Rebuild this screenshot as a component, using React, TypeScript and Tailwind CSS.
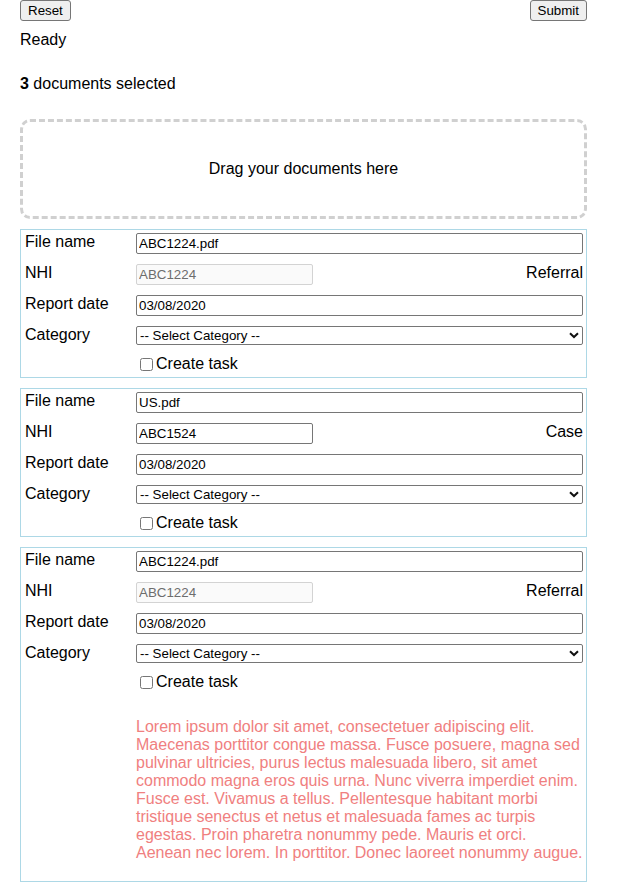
import { useState } from 'react';

type Doc = {
  fileName: string;
  nhi: string;
  nhiLocked: boolean;
  kind: string;
  reportDate: string;
  note?: string;
};

const docs: Doc[] = [
  { fileName: 'ABC1224.pdf', nhi: 'ABC1224', nhiLocked: true, kind: 'Referral', reportDate: '03/08/2020' },
  { fileName: 'US.pdf', nhi: 'ABC1524', nhiLocked: false, kind: 'Case', reportDate: '03/08/2020' },
  {
    fileName: 'ABC1224.pdf',
    nhi: 'ABC1224',
    nhiLocked: true,
    kind: 'Referral',
    reportDate: '03/08/2020',
    note:
      'Lorem ipsum dolor sit amet, consectetuer adipiscing elit. Maecenas porttitor congue massa. Fusce posuere, magna sed pulvinar ultricies, purus lectus malesuada libero, sit amet commodo magna eros quis urna. Nunc viverra imperdiet enim. Fusce est. Vivamus a tellus. Pellentesque habitant morbi tristique senectus et netus et malesuada fames ac turpis egestas. Proin pharetra nonummy pede. Mauris et orci. Aenean nec lorem. In porttitor. Donec laoreet nonummy augue.',
  },
];

const inputCls =
  'mt-[3px] h-[21px] rounded-[2px] border border-[#767676] bg-white px-[2px] text-[13.33px] leading-[15px] text-black outline-none';

function Row({ label, children }: { label: string; children: React.ReactNode }) {
  return (
    <div className="flex h-[31px] items-start">
      <div className="w-[112px] shrink-0 pl-[1px] pt-[3px] leading-[18px]">{label}</div>
      <div className="flex min-w-0 flex-1 items-start">{children}</div>
    </div>
  );
}

function DocCard({ doc }: { doc: Doc }) {
  const [fileName, setFileName] = useState(doc.fileName);
  const [nhi, setNhi] = useState(doc.nhi);
  const [date, setDate] = useState(doc.reportDate);
  const [task, setTask] = useState(false);

  return (
    <div className="mt-[10px] border border-[#add8e6] px-[3px]">
      <Row label="File name">
        <input className={`${inputCls} w-full`} value={fileName} onChange={(e) => setFileName(e.target.value)} />
      </Row>
      <Row label="NHI">
        <input
          className={
            doc.nhiLocked
              ? 'mt-[3px] h-[21px] w-[177px] rounded-[2px] border border-[#d3d3d3] bg-[#fafafa] px-[2px] text-[13.33px] leading-[15px] text-[#6d6d6d] outline-none'
              : `${inputCls} w-[177px]`
          }
          value={nhi}
          disabled={doc.nhiLocked}
          onChange={(e) => setNhi(e.target.value)}
        />
        <span className="ml-auto pt-[3px] leading-[18px]">{doc.kind}</span>
      </Row>
      <Row label="Report date">
        <input className={`${inputCls} w-full`} value={date} onChange={(e) => setDate(e.target.value)} />
      </Row>
      <Row label="Category">
        <div className="relative mt-[3px] w-full">
          <select className="block h-[19px] w-full appearance-none rounded-[2px] border border-[#767676] bg-white pl-[3px] text-[13.33px] leading-[15px] text-black outline-none">
            <option>-- Select Category --</option>
            <option>Referral</option>
            <option>Case</option>
          </select>
          <svg
            className="pointer-events-none absolute right-[4px] top-[6px]"
            width="10"
            height="7"
            viewBox="0 0 10 7"
            fill="none"
          >
            <path d="M1 1.2 5 5 9 1.2" stroke="#111" strokeWidth="2" />
          </svg>
        </div>
      </Row>
      <div className="flex h-[23px] items-start pl-[112px]">
        <label className="flex items-start leading-[18px]">
          <input
            type="checkbox"
            className="ml-[4px] mr-[3px] mt-[4px] h-[13px] w-[13px]"
            checked={task}
            onChange={(e) => setTask(e.target.checked)}
          />
          <span className="pt-[1px]">Create task</span>
        </label>
      </div>
      {doc.note && (
        <p className="mb-[19px] ml-[112px] mt-[23px] leading-[normal] text-[#f08080]">{doc.note}</p>
      )}
    </div>
  );
}

export default function App() {
  const [status, setStatus] = useState('Ready');

  return (
    <div className="ml-[20px] w-[567px] bg-white text-[16px] text-black" style={{ fontFamily: '"Liberation Sans", Arial, sans-serif' }}>
      <div className="flex h-[21px] justify-between">
        <button
          className="h-[21px] rounded-[3px] border border-[#767676] bg-[#efefef] px-[7px] text-[13.33px] leading-[15px]"
          onClick={() => setStatus('Ready')}
        >
          Reset
        </button>
        <button
          className="h-[21px] rounded-[3px] border border-[#767676] bg-[#efefef] px-[7px] text-[13.33px] leading-[15px]"
          onClick={() => setStatus('Submitting...')}
        >
          Submit
        </button>
      </div>
      <div className="mt-[10px] leading-[18px]">{status}</div>
      <div className="mt-[26px] leading-[18px]">
        <b>3</b> documents selected
      </div>
      <div className="mt-[26px] flex h-[100px] items-center justify-center rounded-[10px] border-[3px] border-dashed border-[#d0d0d0] leading-[18px]">
        Drag your documents here
      </div>
      {docs.map((d, i) => (
        <DocCard key={i} doc={d} />
      ))}
    </div>
  );
}
